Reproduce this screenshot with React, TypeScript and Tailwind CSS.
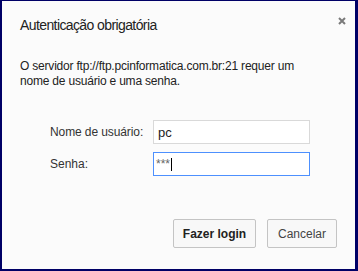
import { useState } from "react";

export default function App() {
  const [user, setUser] = useState("pc");
  const [pass, setPass] = useState("***");

  return (
    <div
      className="flex h-[271px] w-[358px] flex-col border-t border-r-[3px] border-b-2 border-l-2 border-[#000066] bg-[#fbfbfb] text-[#222]"
      style={{ fontFamily: '"Liberation Sans", Arial, sans-serif' }}
    >
      <div className="flex items-start justify-between pt-[14px] pl-[18px] pr-[7px]">
        <h1 className="whitespace-nowrap text-[14px] leading-[20px] font-normal tracking-[-0.6px] text-[#222]">
          Autenticação obrigatória
        </h1>
        <button className="flex h-[12px] w-[12px] items-center justify-center">
          <svg width="8" height="8" viewBox="0 0 8 8">
            <path d="M1 1 L7 7 M7 1 L1 7" stroke="#7a7a7a" strokeWidth="2" />
          </svg>
        </button>
      </div>

      <p className="mt-[24px] whitespace-nowrap pl-[18px] text-[12px] leading-[15px] tracking-[-0.2px] text-[#222]">
        O servidor ftp://ftp.pcinformatica.com.br:21 requer um
        <br />
        nome de usuário e uma senha.
      </p>

      <div className="mt-[31px] flex flex-col gap-[8px] pl-[48px] text-[12px]">
        <label className="flex items-center">
          <span className="w-[103px] whitespace-nowrap tracking-[-0.1px] text-[#333]">Nome de usuário:</span>
          <input
            value={user}
            onChange={(e) => setUser(e.target.value)}
            className="h-[24px] w-[157px] border border-[#d9d9d9] bg-white px-[4px] text-[13px] text-[#222] outline-none"
          />
        </label>
        <label className="flex items-center">
          <span className="w-[103px] whitespace-nowrap text-[#333]">Senha:</span>
          <div className="flex h-[24px] w-[157px] items-center border border-[#4d90fe] bg-white px-[2px]">
            <span className="text-[12px] leading-[13px] text-[#666]">{pass}</span>
            <span className="ml-[1px] h-[13px] w-px bg-black" />
          </div>
        </label>
      </div>

      <div className="flex-1" />

      <div className="flex justify-end gap-[11px] pr-[18px] pb-[21px] text-[12px]">
        <button
          onClick={() => setPass("")}
          className="h-[29px] w-[83px] rounded-[2px] border border-[#c4c4c4] bg-[#f8f8f8] font-bold text-[#222]"
        >
          Fazer login
        </button>
        <button className="h-[29px] w-[70px] rounded-[2px] border border-[#c4c4c4] bg-[#f8f8f8] text-[#444]">
          Cancelar
        </button>
      </div>
    </div>
  );
}
